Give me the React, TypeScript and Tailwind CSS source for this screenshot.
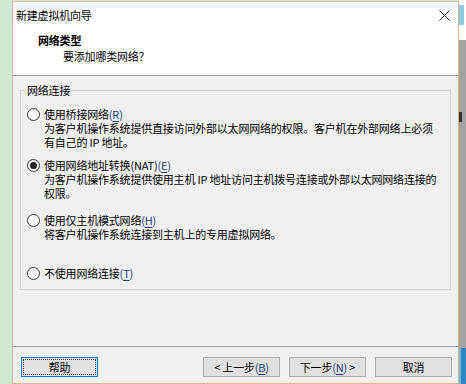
import React from "react";

const font = { fontFamily: '"Noto Sans CJK SC", "Liberation Sans", sans-serif' };

const Radio = ({ checked }: { checked?: boolean }) => (
  <span className="flex h-[13px] w-[13px] shrink-0 items-center justify-center rounded-full border border-[#333] bg-white">
    {checked && <span className="h-[7px] w-[7px] rounded-full bg-[#222]" />}
  </span>
);

const Key = ({ k }: { k: string }) => (
  <span className="text-[#1d3c78]">
    (<span className="underline underline-offset-2">{k}</span>)
  </span>
);

const Option = ({
  label,
  k,
  checked,
  lines,
}: {
  label: string;
  k: string;
  checked?: boolean;
  lines?: string[];
}) => (
  <div className="flex flex-col">
    <div className="flex h-[14px] items-center gap-[4px]">
      <Radio checked={checked} />
      <span>
        {label}
        <Key k={k} />
      </span>
    </div>
    {lines?.map((l) => (
      <div key={l} className="h-[14px] pl-[17px] leading-[14px]">
        {l}
      </div>
    ))}
  </div>
);

const Button = ({
  children,
  focused,
}: {
  children: React.ReactNode;
  focused?: boolean;
}) => (
  <button
    className={`flex h-[20px] w-[77px] items-center justify-center bg-[#e1e1e1] text-[11px] text-black ${
      focused ? "border border-[#0078d7] p-[1px]" : "border border-[#adadad]"
    }`}
  >
    {focused ? (
      <span className="flex h-full w-full items-center justify-center border border-dotted border-[#333]">
        {children}
      </span>
    ) : (
      children
    )}
  </button>
);

export default function App() {
  return (
    <div
      className="flex h-[384px] w-[466px] overflow-hidden bg-[#cfe8d4] text-[11px] leading-[14px] tracking-[-0.2px] text-black"
      style={font}
    >
      <div className="w-[12px] shrink-0 bg-[#cfe8d4]" />

      <div className="mt-[1px] flex w-[447px] shrink-0 flex-col border border-[#dfb596] bg-[#f0f0f0]">
        <div className="flex h-[74px] flex-col border-b border-[#a0a0a0] bg-white">
          <div className="flex h-[26px] items-center justify-between pl-[3px] pr-[8px]">
            <span>新建虚拟机向导</span>
            <svg width="11" height="11" viewBox="0 0 11 11">
              <path d="M0.5 0.5 L10.5 10.5 M10.5 0.5 L0.5 10.5" stroke="#222" strokeWidth="1" />
            </svg>
          </div>
          <div className="pl-[25px] pt-[5px] font-bold">网络类型</div>
          <div className="pl-[50px] pt-[2px]">要添加哪类网络？</div>
        </div>

        <div className="flex flex-1 flex-col border-b border-[#a0a0a0] px-[7px] pt-[14px]">
          <div className="relative flex h-[200px] flex-col border border-[#d5d5d5] px-[6px] pt-[16px]">
            <span className="absolute left-[5px] top-[-8px] bg-[#f0f0f0] px-[1px]">网络连接</span>
            <Option
              label="使用桥接网络"
              k="R"
              lines={[
                "为客户机操作系统提供直接访问外部以太网网络的权限。客户机在外部网络上必须",
                "有自己的 IP 地址。",
              ]}
            />
            <div className="h-[9px]" />
            <Option
              label="使用网络地址转换(NAT)"
              k="E"
              checked
              lines={[
                "为客户机操作系统提供使用主机 IP 地址访问主机拨号连接或外部以太网网络连接的",
                "权限。",
              ]}
            />
            <div className="h-[13px]" />
            <Option
              label="使用仅主机模式网络"
              k="H"
              lines={["将客户机操作系统连接到主机上的专用虚拟网络。"]}
            />
            <div className="h-[25px]" />
            <Option label="不使用网络连接" k="T" />
          </div>
        </div>

        <div className="flex h-[36px] items-start pl-[8px] pr-[6px] pt-[10px]">
          <Button focused>帮助</Button>
          <div className="flex-1" />
          <div className="flex gap-[9px]">
            <Button>
              &lt;&nbsp;上一步<Key k="B" />
            </Button>
            <Button>
              下一步<Key k="N" />&nbsp;&gt;
            </Button>
            <Button>取消</Button>
          </div>
        </div>
      </div>

      <div className="flex flex-1 flex-col">
        <div className="flex h-[40px] flex-col bg-white pt-[5px]">
          <div className="h-[20px] w-[5px] bg-[#8fcbe4]" />
        </div>
        <div className="flex flex-1 flex-col bg-[#a3a3a3] pt-[72px]">
          <div className="h-[10px] w-[3px] bg-[#333]" />
        </div>
        <div className="flex h-[36px]">
          <div className="w-[2px] bg-[#6fb6e0]" />
          <div className="flex-1 bg-[#2d86c4]" />
        </div>
      </div>
    </div>
  );
}
